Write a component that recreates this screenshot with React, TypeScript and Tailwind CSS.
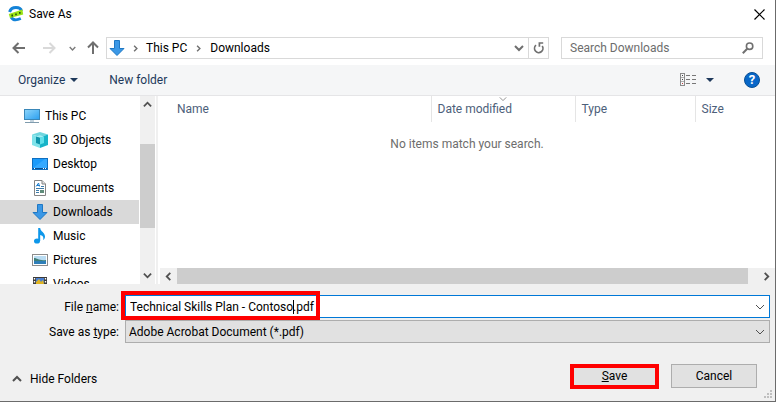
import type { ReactNode } from "react";

type Dir = "up" | "down" | "left" | "right";

const chevrons: Record<Dir, string> = {
  up: "M1 7 L5 3 L9 7",
  down: "M1 3 L5 7 L9 3",
  left: "M7 1 L3 5 L7 9",
  right: "M3 1 L7 5 L3 9",
};

function Chevron({ dir, size = 10, width = 2, color = "#505050" }: { dir: Dir; size?: number; width?: number; color?: string }) {
  return (
    <svg width={size} height={size} viewBox="0 0 10 10" fill="none" stroke={color} strokeWidth={width} className="shrink-0">
      <path d={chevrons[dir]} />
    </svg>
  );
}

function AppLogo() {
  return (
    <svg width="16" height="16" viewBox="0 0 16 16" className="shrink-0">
      <path d="M1.6 6 C2.6 2.8 5 1.6 8 1.6 C11 1.6 13 3 13.4 5" fill="none" stroke="#1483d8" strokeWidth="3" />
      <path d="M3 11 C4.6 14 8.4 14.6 12.8 12.6" fill="none" stroke="#1483d8" strokeWidth="2.8" />
      <path d="M0.8 8 L14.4 3.6 L15.2 8.4 L2 12 Z" fill="#9be415" />
      <path d="M3.4 8.6 H5 V10.4 H3.4 Z M7.2 7.4 H8.8 V9.2 H7.2 Z M11 6 H12.6 V7.8 H11 Z" fill="#23500f" />
    </svg>
  );
}

function PcIcon() {
  return (
    <svg width="16" height="16" viewBox="0 0 16 16" className="shrink-0">
      <defs>
        <linearGradient id="pc" x1="0" y1="0" x2="1" y2="1">
          <stop offset="0" stopColor="#8fd6fb" />
          <stop offset="1" stopColor="#2a9ff0" />
        </linearGradient>
      </defs>
      <rect x="0.5" y="1.5" width="15" height="10" fill="url(#pc)" stroke="#3a87b8" />
      <path d="M6 12 H10 V14 H6 Z" fill="#c3d3de" />
      <path d="M1 14.5 H15" stroke="#7f9bad" />
    </svg>
  );
}

function CubeIcon() {
  return (
    <svg width="16" height="16" viewBox="0 0 16 16" className="shrink-0">
      <path d="M0 2.5 L8 0 L16 2.5 L8 5 Z" fill="#6fd6de" />
      <path d="M0 2.5 L8 5 V16 L0 13 Z" fill="#7fe3ea" />
      <path d="M16 2.5 L8 5 V16 L16 13 Z" fill="#17b4c8" />
      <path d="M4 4.4 L8 5.6 V12.4 L4 11 Z" fill="#0d94aa" />
      <path d="M8 5.6 L12 4.4 V11 L8 12.4 Z" fill="#5fe0ea" />
      <path d="M4 4.4 L8 3.2 L12 4.4 L8 5.6 Z" fill="#a4eef3" />
    </svg>
  );
}

function DesktopIcon() {
  return (
    <svg width="16" height="16" viewBox="0 0 16 16" className="shrink-0">
      <rect x="0.5" y="2.5" width="15" height="11" fill="#1c9bfa" stroke="#0f6fc0" />
      <path d="M1 12 L13 3 H15 V12 Z" fill="#35a9ff" />
      <path d="M1 12.5 H15" stroke="#0a4f92" />
      <path d="M2 12.5 H3 M11 12.5 H12 M13 12.5 H14" stroke="#ffffff" />
    </svg>
  );
}

function DocumentIcon() {
  return (
    <svg width="16" height="16" viewBox="0 0 16 16" className="shrink-0">
      <path d="M2.5 0.5 H10 L13.5 4 V15.5 H2.5 Z" fill="#ffffff" stroke="#848484" />
      <path d="M10 0.5 V4 H13.5" fill="#e2e2e2" stroke="#848484" />
      <path d="M4 6.5 L6.6 3 L7.4 6.5 M5 5.5 H8" fill="none" stroke="#1e7fd0" />
      <path d="M9 6.5 H12 M4 8.5 H12 M4 10.5 H7 M4 12.5 H7" stroke="#3d7ba8" />
      <rect x="8" y="10" width="4" height="3" fill="#5f8c7a" />
    </svg>
  );
}

function DownloadIcon() {
  return (
    <svg width="16" height="16" viewBox="0 0 16 16" className="shrink-0">
      <path d="M5.5 0.5 H10.5 V8.5 H15 L8 15.5 L1 8.5 H5.5 Z" fill="#3b98e6" stroke="#1f78c4" />
    </svg>
  );
}

function MusicIcon() {
  return (
    <svg width="16" height="16" viewBox="0 0 16 16" className="shrink-0">
      <ellipse cx="5" cy="13" rx="3" ry="2.6" fill="#0e97ea" />
      <path d="M6.2 0 H8.2 C8.4 3.4 13 4.8 13 8.4 C13 10 12.4 11.2 11.2 12 C12 8.6 10 7.4 8.2 7 V13 H6.2 Z" fill="#0e97ea" />
    </svg>
  );
}

function PictureIcon() {
  return (
    <svg width="16" height="16" viewBox="0 0 16 16" className="shrink-0">
      <rect x="0.5" y="2.5" width="15" height="11" fill="#ffffff" stroke="#8c8c8c" />
      <rect x="2" y="4" width="12" height="8" fill="#b9dcf2" />
      <path d="M2 6 C5 6 7 9 14 8 V9.5 H2 Z" fill="#3f7f78" />
      <rect x="2" y="9" width="12" height="3" fill="#2f7fb8" />
    </svg>
  );
}

function VideoIcon() {
  return (
    <svg width="16" height="16" viewBox="0 0 16 16" className="shrink-0">
      <rect x="1" y="1" width="14" height="14" fill="#3a3a3a" />
      <path d="M2.5 2 V15 M13.5 2 V15" stroke="#ffffff" strokeWidth="1.4" strokeDasharray="1.5 1.5" />
      <rect x="4" y="2" width="8" height="6" fill="#4a7fd0" />
      <path d="M4 6 L7 3 L9 6 L11 4 L12 8 H4 Z" fill="#e0b422" />
      <rect x="4" y="9" width="8" height="5" fill="#5a9a3a" />
    </svg>
  );
}

function Arrow({ dir, color }: { dir: "left" | "right" | "up"; color: string }) {
  const paths = {
    left: "M13 7 H2 M6.5 2 L1.5 7 L6.5 12",
    right: "M1 7 H12 M7.5 2 L12.5 7 L7.5 12",
    up: "M7 13 V2 M2 6.5 L7 1.5 L12 6.5",
  };
  return (
    <svg width="14" height="14" viewBox="0 0 14 14" fill="none" stroke={color} strokeWidth="2">
      <path d={paths[dir]} />
    </svg>
  );
}

function Caret() {
  return (
    <svg width="8" height="4" viewBox="0 0 8 4">
      <path d="M0 0 H8 L4 4 Z" fill="#1e395b" />
    </svg>
  );
}

const folders: { name: string; icon: ReactNode; root?: boolean; selected?: boolean }[] = [
  { name: "This PC", icon: <PcIcon />, root: true },
  { name: "3D Objects", icon: <CubeIcon /> },
  { name: "Desktop", icon: <DesktopIcon /> },
  { name: "Documents", icon: <DocumentIcon /> },
  { name: "Downloads", icon: <DownloadIcon />, selected: true },
  { name: "Music", icon: <MusicIcon /> },
  { name: "Pictures", icon: <PictureIcon /> },
  { name: "Videos", icon: <VideoIcon /> },
];

function TitleBar() {
  return (
    <header className="flex h-7 shrink-0 items-center gap-[5px] pr-2 pl-2">
      <AppLogo />
      <h1 className="flex-1">Save As</h1>
      <button aria-label="Close" className="flex size-4 items-center justify-center">
        <svg width="11" height="11" viewBox="0 0 11 11" stroke="#000000" strokeWidth="1.2">
          <path d="M0.5 0.5 L10.5 10.5 M10.5 0.5 L0.5 10.5" />
        </svg>
      </button>
    </header>
  );
}

function NavigationBar() {
  return (
    <nav className="flex h-9 shrink-0 items-center pt-1 pr-3 pl-3">
      <button aria-label="Back" className="w-[30px]"><Arrow dir="left" color="#6f6f6f" /></button>
      <button aria-label="Forward" className="w-[27px]"><Arrow dir="right" color="#d9d9d9" /></button>
      <button aria-label="Recent locations" className="w-[17px]"><Chevron dir="down" size={7} color="#7a7a7a" /></button>
      <button aria-label="Up" className="w-5"><Arrow dir="up" color="#6f6f6f" /></button>
      <div className="flex h-[22px] flex-1 items-center border border-[#d9d9d9]">
        <span className="flex w-[25px] pl-[2px]"><DownloadIcon /></span>
        <Chevron dir="right" size={7} color="#6f6f6f" />
        <button className="pl-[7px]">This PC</button>
        <span className="px-2"><Chevron dir="right" size={7} color="#6f6f6f" /></span>
        <button>Downloads</button>
        <button aria-label="Previous locations" className="ml-auto px-[4px]"><Chevron dir="down" color="#6f6f6f" /></button>
        <button aria-label="Refresh" className="flex h-full w-5 items-center justify-center border-l border-[#d9d9d9]">
          <svg width="12" height="12" viewBox="0 0 12 12" fill="none" stroke="#707070" strokeWidth="1.7">
            <path d="M3 3.2 A4.2 4.2 0 1 0 9.2 4" />
            <path d="M6.4 4.8 V1 H10.2" />
          </svg>
        </button>
      </div>
      <div className="ml-3 flex h-[22px] w-[202px] items-center border border-[#d9d9d9] pr-2 pl-2">
        <input aria-label="Search Downloads" placeholder="Search Downloads" className="min-w-0 flex-1 outline-none placeholder:text-[#6d6d6d]" />
        <svg width="12" height="12" viewBox="0 0 12 12" fill="none" stroke="#707070">
          <circle cx="7.6" cy="4.2" r="3.2" strokeWidth="1.6" />
          <path d="M5.2 6.8 L0.8 11.2" strokeWidth="2" />
        </svg>
      </div>
    </nav>
  );
}

function Toolbar() {
  return (
    <div className="mt-px flex h-[31px] shrink-0 items-center border-b border-[#e5e5e7] bg-[#f5f6f7] pr-[15px] pl-[18px] text-[#1e395b]">
      <button className="flex items-center gap-[5px]">Organize <Caret /></button>
      <button className="ml-[31px]">New folder</button>
      <button aria-label="Change view" className="ml-auto">
        <svg width="17" height="14" viewBox="0 0 17 14" fill="none" stroke="#8a8a8a">
          <rect x="0.5" y="0.5" width="4" height="12" />
          <path d="M1 4.5 H4 M1 8.5 H4" stroke="#b0b0b0" />
          <path d="M2 2.5 H3 M2 6.5 H3" stroke="#444444" />
          <path d="M2 10.5 H3" stroke="#c04040" />
          <path d="M6 2.5 H10 M12 2.5 H16 M6 6.5 H10 M12 6.5 H16 M6 10.5 H10 M12 10.5 H16" stroke="#777777" />
        </svg>
      </button>
      <button aria-label="More view options" className="ml-[9px]"><Caret /></button>
      <button aria-label="Help" className="ml-[30px] flex size-4 items-center justify-center rounded-full border border-[#084f94] bg-[#0867c8] text-[13px] font-bold text-white">?</button>
    </div>
  );
}

function FolderTree() {
  return (
    <aside className="flex w-[159px] shrink-0 overflow-hidden">
      <ul className="w-[139px] pt-2">
        {folders.map((f) => (
          <li key={f.name}>
            <button className={`flex h-6 w-full items-center gap-[5px] ${f.root ? "pl-6" : "pl-8"} ${f.selected ? "bg-[#d9d9d9]" : ""}`}>
              {f.icon}
              {f.name}
            </button>
          </li>
        ))}
      </ul>
      <div className="ml-px flex w-[15px] flex-col items-center justify-between bg-[#f0f0f0]">
        <span className="flex h-[17px] items-center"><Chevron dir="up" size={9} /></span>
        <span className="mt-[31px] mb-auto h-[84px] w-full bg-[#cdcdcd]" />
        <span className="flex h-[17px] items-center"><Chevron dir="down" size={9} /></span>
      </div>
      <div className="ml-px w-[2px] bg-[#f0f0f0]" />
    </aside>
  );
}

function FileList() {
  return (
    <main className="flex min-w-0 flex-1 flex-col">
      <table className="w-full table-fixed text-left">
        <thead className="text-[#4c607a]">
          <tr className="h-[26px]">
            <th className="w-[272px] border-r border-[#e5e5e5] pl-[18px] font-normal">Name</th>
            <th className="relative w-36 border-r border-[#e5e5e5] pl-[6px] font-normal">
              Date modified
              <span className="absolute -top-[1px] left-1/2 -translate-x-1/2"><Chevron dir="down" size={8} width={1} color="#777777" /></span>
            </th>
            <th className="w-[120px] border-r border-[#e5e5e5] pl-[6px] font-normal">Type</th>
            <th className="pl-[6px] font-normal">Size</th>
          </tr>
        </thead>
        <tbody>
          <tr>
            <td colSpan={4} className="pt-[14px] text-center text-[#6d6d6d]">No items match your search.</td>
          </tr>
        </tbody>
      </table>
      <div className="mt-auto ml-px flex h-4 items-center bg-[#f0f0f0]">
        <span className="flex w-[17px] justify-center"><Chevron dir="left" size={9} /></span>
        <span className="h-full flex-1 bg-[#cdcdcd]" />
        <span className="flex w-[27px] justify-end pr-1"><Chevron dir="right" size={9} /></span>
      </div>
    </main>
  );
}

function SavePanel() {
  return (
    <footer className="shrink-0 bg-[#f0f0f0] pt-[11px] pr-[5px]">
      <div className="flex items-center">
        <label htmlFor="file-name" className="w-[125px] pr-[6px] text-right">File <u>n</u>ame:</label>
        <div className="relative flex h-[23px] flex-1 items-center border border-[#0078d7] bg-white pr-1">
          <input id="file-name" defaultValue="Technical Skills Plan - Contoso.pdf" className="min-w-0 flex-1 pl-1 outline-none" />
          <span className="absolute top-1 left-[167px] h-[14px] w-px bg-black" />
          <button aria-label="Previous file names"><Chevron dir="down" size={10} width={1} /></button>
          <span className="pointer-events-none absolute -top-[5px] -left-[5px] h-[29px] w-[199px] border-4 border-[#ff0000]" />
        </div>
      </div>
      <div className="mt-[2px] flex items-center">
        <label htmlFor="file-type" className="w-[125px] pr-[6px] text-right">Save as <u>t</u>ype:</label>
        <div className="relative flex h-[23px] flex-1 items-center">
          <select id="file-type" className="h-full w-full appearance-none border border-[#adadad] bg-[#e1e1e1] pl-[3px]">
            <option>Adobe Acrobat Document (*.pdf)</option>
          </select>
          <span className="pointer-events-none absolute right-[5px]"><Chevron dir="down" size={10} width={1} /></span>
        </div>
      </div>
      <div className="mt-5 flex h-[26px] items-center pr-[13px] pl-3">
        <button className="mt-[6px] flex items-center gap-2"><Chevron dir="up" />Hide Folders</button>
        <button className="ml-auto h-[25px] w-[89px] border-4 border-[#ff0000] bg-[#e1e1e1]"><u>S</u>ave</button>
        <button className="ml-3 h-6 w-[86px] border border-[#adadad] bg-[#e1e1e1]">Cancel</button>
      </div>
      <div className="flex h-3 items-end justify-end">
        <svg width="8" height="8" viewBox="0 0 8 8" fill="#bfbfbf" className="mb-[3px] -mr-[2px]">
          <path d="M6 0h2v2H6z M3 3h2v2H3z M6 3h2v2H6z M0 6h2v2H0z M3 6h2v2H3z M6 6h2v2H6z" />
        </svg>
      </div>
    </footer>
  );
}

export default function App() {
  return (
    <div className="flex h-screen w-full flex-col border-r border-b border-[#6b6b6b] bg-white font-['Roboto','Open_Sans',sans-serif] text-[12px] leading-4 text-black">
      <TitleBar />
      <NavigationBar />
      <Toolbar />
      <div className="flex min-h-0 flex-1">
        <FolderTree />
        <FileList />
      </div>
      <SavePanel />
    </div>
  );
}
